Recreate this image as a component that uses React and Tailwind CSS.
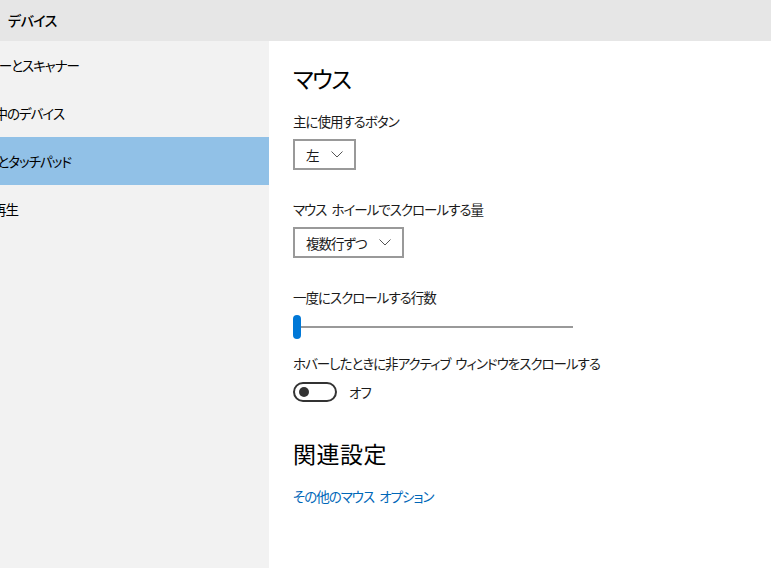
import React from "react";

const font = "font-['Yu_Gothic_UI','Noto_Sans_CJK_JP',sans-serif] [font-feature-settings:'palt']";
const body = "text-[13.5px] leading-[20px] tracking-[-1px] whitespace-nowrap";

// sidebar labels are clipped on the left; each is anchored by where it ends
const navItems = [
  { label: "プリンターとスキャナー", end: "w-[79px]" },
  { label: "接続中のデバイス", end: "w-[64px]" },
  { label: "マウスとタッチパッド", end: "w-[71px]", active: true },
  { label: "自動再生", end: "w-[18px]" },
];

const Gap = () => <span className="inline-block w-[5px]" />;

const Chevron = () => (
  <svg width="12" height="7" viewBox="0 0 12 7" fill="none">
    <path d="M0.5 0.5 L6 6 L11.5 0.5" stroke="#555" strokeWidth="1" />
  </svg>
);

const Select = ({ value }) => (
  <div className="flex items-center h-[31px] border-2 border-[#999] bg-white pl-[11px] pr-[11px] gap-[12px]">
    <span className={`${body} tracking-[-0.3px] text-[#1a1a1a]`}>{value}</span>
    <Chevron />
  </div>
);

export default function App() {
  return (
    <div className={`w-[771px] h-[568px] overflow-hidden flex flex-col bg-white ${font}`}>
      <div className="h-[41px] shrink-0 bg-[#e6e6e6] flex items-center pl-[8px]">
        <span className="text-[14px] tracking-[-0.5px] font-medium text-black">デバイス</span>
      </div>
      <div className="flex flex-1">
        <div className="w-[269px] shrink-0 bg-[#f2f2f2] overflow-hidden">
          {navItems.map((item) => (
            <div
              key={item.label}
              className={`h-[48px] flex items-center ${item.active ? "bg-[#91c1e7]" : ""}`}
            >
              <div className={`${item.end} shrink-0 flex justify-end`}>
                <span className={`${body} tracking-[-0.6px] text-black`}>{item.label}</span>
              </div>
            </div>
          ))}
        </div>
        <div className="flex-1 pl-[24px] pt-[22px] text-[#1a1a1a]">
          <h1 className="text-[23px] leading-[30px] tracking-[-1.5px] font-normal text-black">マウス</h1>

          <div className={`mt-[18px] ${body}`}>主に使用するボタン</div>
          <div className="mt-[8px] flex">
            <Select value="左" />
          </div>

          <div className={`mt-[29px] ${body}`}>
            マウス<Gap />ホイールでスクロールする量
          </div>
          <div className="mt-[8px] flex">
            <Select value="複数行ずつ" />
          </div>

          <div className={`mt-[29px] ${body}`}>一度にスクロールする行数</div>
          <div className="mt-[8px] w-[280px] h-[24px] flex items-center">
            <div className="w-[8px] h-[24px] rounded-full bg-[#0078d7] shrink-0" />
            <div className="flex-1 h-[2px] bg-[#999]" />
          </div>

          <div className={`mt-[14px] ${body}`}>
            ホバーしたときに非アクティブ<Gap />ウィンドウをスクロールする
          </div>
          <div className="mt-[9px] flex items-center gap-[12px]">
            <div className="w-[44px] h-[20px] rounded-full border-2 border-[#333] flex items-center pl-[4px]">
              <div className="w-[10px] h-[10px] rounded-full bg-[#333]" />
            </div>
            <span className={body}>オフ</span>
          </div>

          <h2 className="mt-[36px] text-[23px] leading-[30px] tracking-[0.5px] font-normal text-black">関連設定</h2>
          <a className={`block mt-[18px] ${body} tracking-[-0.7px] text-[#0067b8]`}>
            その他のマウス<Gap />オプション
          </a>
        </div>
      </div>
    </div>
  );
}
